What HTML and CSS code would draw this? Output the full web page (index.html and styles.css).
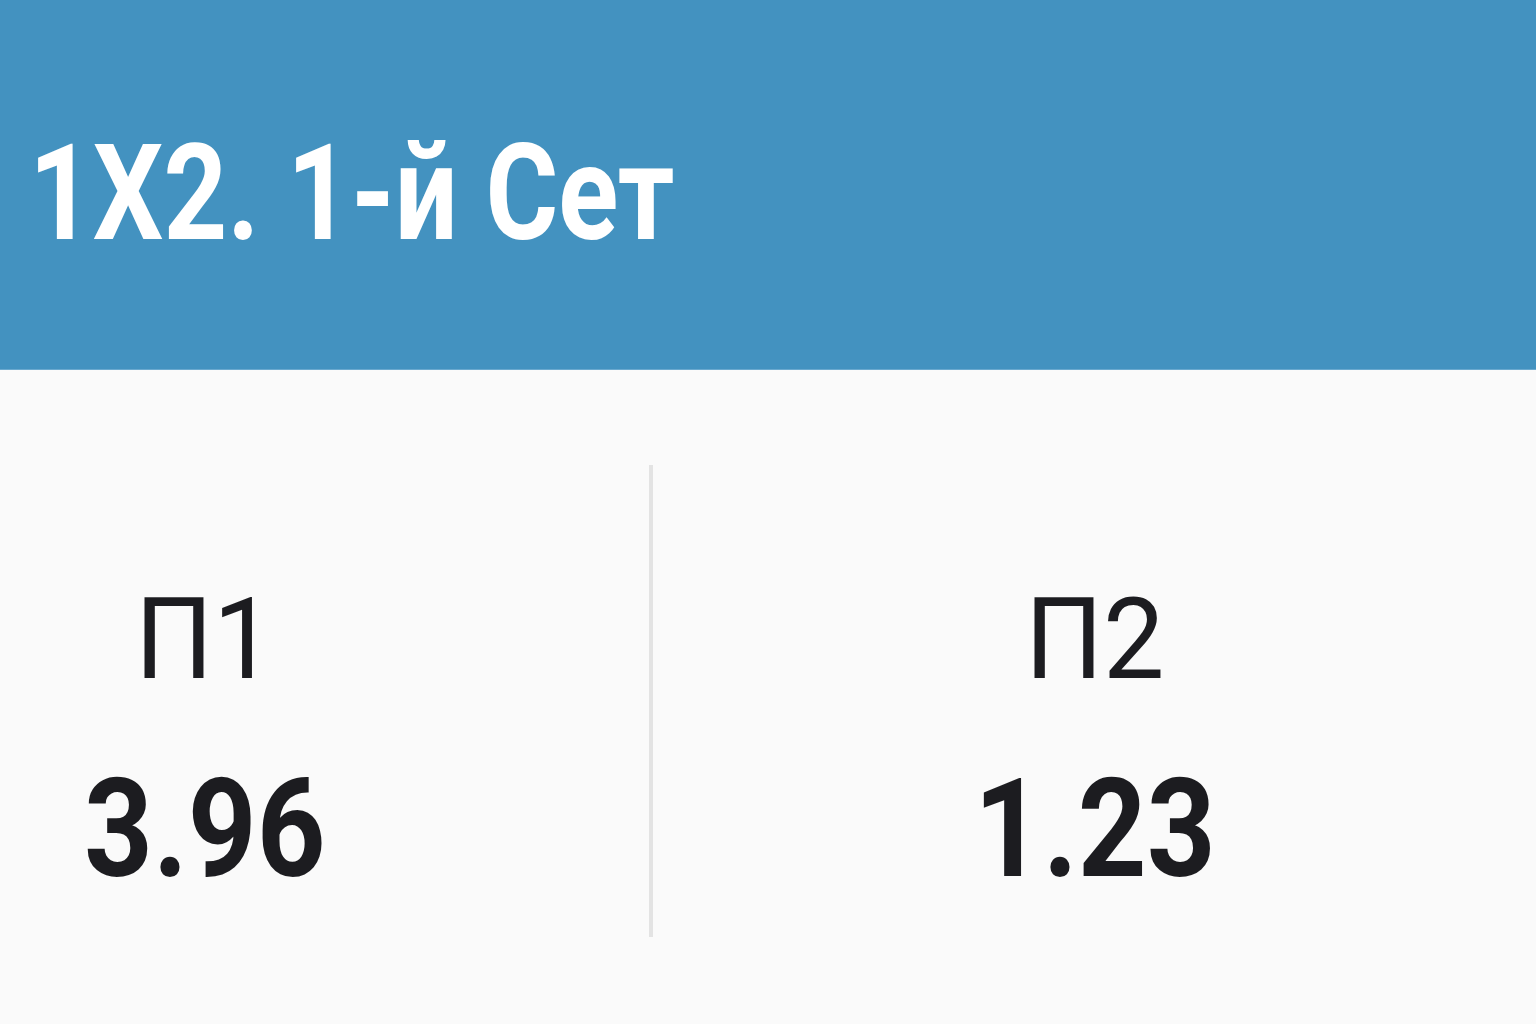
FILE: index.html
```html
<!DOCTYPE html>
<html lang="ru">
<head>
<meta charset="utf-8">
<title>1X2. 1-й Сет</title>
<link rel="stylesheet" href="styles.css">
</head>
<body>
<div class="page">
  <header class="header">
    <h1 class="title">1X2. 1-й Сет</h1>
  </header>
  <section class="market">
    <div class="cell cell-left">
      <div class="outcome">
        <span class="label">П1</span>
        <span class="odd">3.96</span>
      </div>
    </div>
    <div class="divider"></div>
    <div class="cell cell-right">
      <div class="outcome">
        <span class="label">П2</span>
        <span class="odd">1.23</span>
      </div>
    </div>
  </section>
</div>
</body>
</html>
```
FILE: styles.css
```css
* { box-sizing: border-box; }
html, body {
  margin: 0;
  padding: 0;
  width: 1536px;
  height: 1024px;
  overflow: hidden;
  background: #fafafa;
  font-family: Roboto, "Liberation Sans", Arial, sans-serif;
}
.page {
  display: flex;
  flex-direction: column;
  height: 1024px;
}
.header {
  height: 370px;
  background: #4392c0;
  border-bottom: 1px solid #6aa9cf;
  padding: 127px 0 0 29px;
}
.title {
  margin: 0;
  font-size: 134px;
  line-height: 1;
  font-weight: 700;
  color: #ffffff;
  transform: scaleX(0.83);
  transform-origin: left center;
  white-space: nowrap;
}
.market {
  display: grid;
  grid-template-columns: 649px 4px 1fr;
  padding-top: 95px;
}
.divider {
  height: 472px;
  background: #e3e3e3;
}
.cell {
  display: flex;
  justify-content: center;
  padding-top: 117px;
}
.cell-left { padding-right: 240px; }
.outcome {
  display: flex;
  flex-direction: column;
  align-items: center;
  color: #1c1c20;
}
.label {
  font-size: 114px;
  line-height: 1;
  font-weight: 400;
  transform: scaleX(0.96);
}
.odd {
  margin-top: 65px;
  font-size: 137px;
  line-height: 1;
  font-weight: 700;
  transform: scaleX(0.877);
}
```
